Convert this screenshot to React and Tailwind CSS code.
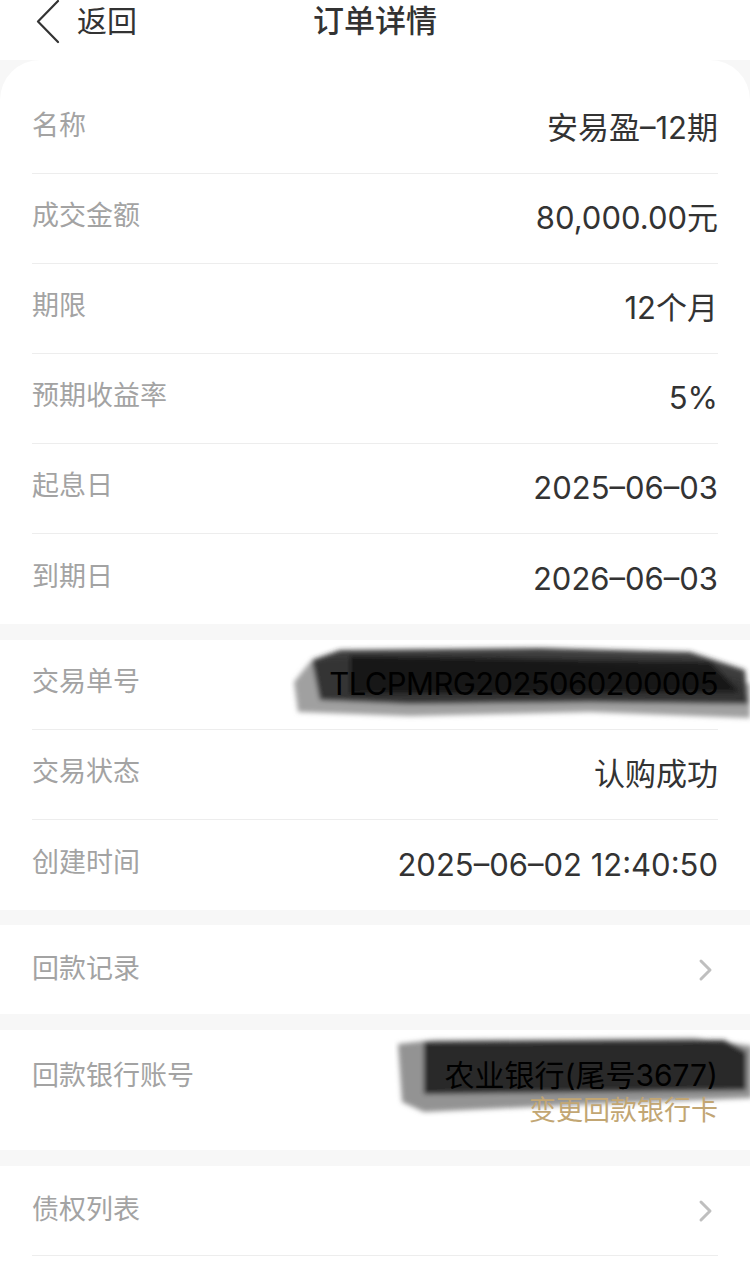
import React from "react";

function Row({ label, value, last, valueClass }) {
  return (
    <div className={"mx-[32px] h-[90px] flex items-center justify-between " + (last ? "" : "border-b border-[#ededed]")}>
      <span className="text-[27px] text-[#a3a3a3] -mt-[4px]">{label}</span>
      <span className={"relative z-10 text-[31px] " + (valueClass || "text-[#333333]")}>{value}</span>
    </div>
  );
}

function Chevron() {
  return (
    <svg width="16" height="24" viewBox="0 0 16 24" className="mr-[4px]">
      <path d="M3 3 L12 12 L3 21" fill="none" stroke="#bfbfbf" strokeWidth="3" strokeLinecap="round" strokeLinejoin="round" />
    </svg>
  );
}

export default function App() {
  return (
    <div className="w-[750px] h-[1277px] overflow-hidden bg-[#f7f7f7] font-['Inter','Noto_Sans_CJK_SC',sans-serif]">
      {/* header */}
      <div className="h-[60px] bg-white">
        <div className="relative h-[42px] flex items-center">
          <svg width="30" height="44" viewBox="0 0 30 44" className="absolute left-[32px] top-0">
            <path d="M26 1 L6 21.5 L26 42" fill="none" stroke="#333" strokeWidth="2.2" strokeLinecap="round" strokeLinejoin="round" />
          </svg>
          <span className="absolute left-[77px] text-[30px] text-[#333333]">返回</span>
          <span className="w-full text-center text-[31px] font-medium text-[#333333]">订单详情</span>
        </div>
      </div>

      {/* section 1 */}
      <div className="bg-white rounded-t-[40px] pt-[24px]">
        <Row label="名称" value="安易盈–12期" />
        <Row label="成交金额" value="80,000.00元" />
        <Row label="期限" value="12个月" />
        <Row label="预期收益率" value="5%" />
        <Row label="起息日" value="2025–06–03" />
        <Row label="到期日" value="2026–06–03" last />
      </div>

      {/* section 2 */}
      <div className="mt-[16px] bg-white relative">
        <svg width="462" height="85" viewBox="0 0 462 85" className="absolute left-[290px] top-[2px]">
          <defs>
            <filter id="blurA" x="-10%" y="-20%" width="120%" height="140%">
              <feGaussianBlur stdDeviation="2.5" />
            </filter>
          </defs>
          <g filter="url(#blurA)">
            <path d="M4 40 L20 20 L40 16 L200 14 L300 22 L420 30 L460 42 L460 76 L300 70 L120 74 L8 70 Z" fill="#8f8f8f" opacity="0.85" />
            <path d="M22 18 L50 8 L250 6 L400 10 L455 28 L458 62 L300 60 L120 62 L30 58 Z" fill="#2a2a2a" opacity="0.92" />
            <path d="M60 14 L420 20 L450 50 L60 52 Z" fill="#111" opacity="0.75" />
          </g>
        </svg>
        <Row label="交易单号" value="TLCPMRG2025060200005" valueClass="text-black tracking-[-0.6px]" />
        <Row label="交易状态" value="认购成功" />
        <Row label="创建时间" value="2025–06–02 12:40:50" last />
      </div>

      {/* 回款记录 */}
      <div className="mt-[15px] bg-white">
        <div className="mx-[32px] h-[89px] flex items-center justify-between">
          <span className="text-[27px] text-[#a3a3a3]">回款记录</span>
          <Chevron />
        </div>
      </div>

      {/* 回款银行账号 */}
      <div className="mt-[16px] bg-white h-[120px] relative">
        <svg width="360" height="85" viewBox="0 0 360 85" className="absolute left-[394px] top-[2px]">
          <defs>
            <filter id="blurB" x="-10%" y="-20%" width="120%" height="140%">
              <feGaussianBlur stdDeviation="2.5" />
            </filter>
          </defs>
          <g filter="url(#blurB)">
            <path d="M4 12 L40 8 L300 6 L358 14 L358 66 L200 72 L30 80 L8 70 Z" fill="#808080" opacity="0.85" />
            <path d="M30 10 L330 8 L352 20 L352 58 L30 62 Z" fill="#222" opacity="0.92" />
          </g>
        </svg>
        <div className="relative mx-[32px] h-full flex items-start justify-between pt-[26px]">
          <span className="text-[27px] text-[#a3a3a3]">回款银行账号</span>
          <div className="flex flex-col items-end pt-[1px]">
            <span className="text-[30px] text-black leading-[36px]">农业银行(尾号3677)</span>
            <span className="text-[27px] text-[#c2a673] leading-[36px]">变更回款银行卡</span>
          </div>
        </div>
      </div>

      {/* 债权列表 */}
      <div className="mt-[16px] bg-white h-[111px]">
        <div className="mx-[32px] h-[90px] flex items-center justify-between border-b border-[#ededed]">
          <span className="text-[27px] text-[#a3a3a3]">债权列表</span>
          <Chevron />
        </div>
      </div>
    </div>
  );
}
